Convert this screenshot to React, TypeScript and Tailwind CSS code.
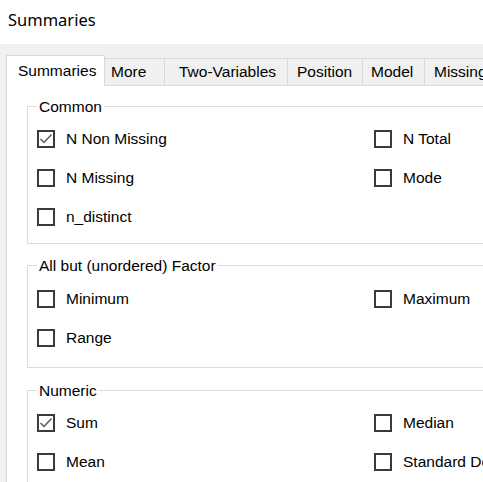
import React from 'react';

const tabs = [
  { label: 'Summaries', w: 'w-[99px]', pl: 'pl-[11px]', active: true },
  { label: 'More', w: 'w-[60px]', pl: 'pl-[6px]' },
  { label: 'Two-Variables', w: 'w-[123px]', pl: 'pl-[14px]' },
  { label: 'Position', w: 'w-[75px]', pl: 'pl-[9px]' },
  { label: 'Model', w: 'w-[62px]', pl: 'pl-[8px]' },
  { label: 'Missing Values', w: 'w-[130px]', pl: 'pl-[9px]' },
];

const Check = ({ label, checked }: { label: string; checked?: boolean }) => (
  <div className="flex h-[39px] items-center">
    <span className="flex h-[18px] w-[18px] shrink-0 items-center justify-center border-2 border-[#3a3a3a] bg-white">
      {checked && (
        <svg width="14" height="14" viewBox="0 0 14 14">
          <polyline points="1.5,7 5,10.5 12.5,2.5" fill="none" stroke="#5a5a5a" strokeWidth="1.5" />
        </svg>
      )}
    </span>
    <span className="ml-[11px] whitespace-nowrap">{label}</span>
  </div>
);

const Group = ({
  title,
  rows,
  className,
}: {
  title: string;
  rows: [React.ReactNode, React.ReactNode?][];
  className: string;
}) => (
  <fieldset className={`border border-[#dcdcdc] pl-[9px] ${className}`}>
    <legend className="ml-0 px-[2px] leading-[17px]">{title}</legend>
    <div className="grid grid-cols-[337px_1fr]">
      {rows.map((r, i) => (
        <React.Fragment key={i}>
          <div>{r[0]}</div>
          <div>{r[1]}</div>
        </React.Fragment>
      ))}
    </div>
  </fieldset>
);

export default function App() {
  return (
    <div
      className="h-[482px] w-[483px] overflow-hidden bg-white text-[15.5px] text-black"
      style={{ fontFamily: '"Liberation Sans", Arial, sans-serif' }}
    >
      <div className="flex h-[44px] items-start pl-[8px] pt-[9px]">
        <span className="text-[16.5px] leading-[22px]" style={{ fontFamily: '"Noto Sans", sans-serif' }}>
          Summaries
        </span>
      </div>

      <div className="h-[438px] w-[620px] bg-[#f0f0f0] pl-[6px]">
        <div className="flex h-[41px] items-end">
          {tabs.map((t) =>
            t.active ? (
              <div
                key={t.label}
                className={`${t.w} ${t.pl} relative z-10 -mb-px flex h-[31px] shrink-0 items-center border border-b-0 border-[#d9d9d9] bg-white`}
              >
                {t.label}
              </div>
            ) : (
              <div
                key={t.label}
                className={`${t.w} ${t.pl} flex h-[27px] shrink-0 items-center border-t border-r border-[#d9d9d9] bg-[#f0f0f0] whitespace-nowrap`}
              >
                {t.label}
              </div>
            )
          )}
        </div>

        <div className="h-[400px] border-t border-l border-[#d9d9d9] bg-white pl-[20px] pt-[12px]">
          <Group
            title="Common"
            className="pt-[4px] pb-[7px]"
            rows={[
              [<Check label="N Non Missing" checked />, <Check label="N Total" />],
              [<Check label="N Missing" />, <Check label="Mode" />],
              [<Check label="n_distinct" />],
            ]}
          />
          <Group
            title="All but (unordered) Factor"
            className="mt-[13px] pt-[5px] pb-[10px]"
            rows={[
              [<Check label="Minimum" />, <Check label="Maximum" />],
              [<Check label="Range" />],
            ]}
          />
          <Group
            title="Numeric"
            className="mt-[14px] pt-[4px] pb-[10px]"
            rows={[
              [<Check label="Sum" checked />, <Check label="Median" />],
              [<Check label="Mean" />, <Check label="Standard Deviation" />],
            ]}
          />
        </div>
      </div>
    </div>
  );
}
